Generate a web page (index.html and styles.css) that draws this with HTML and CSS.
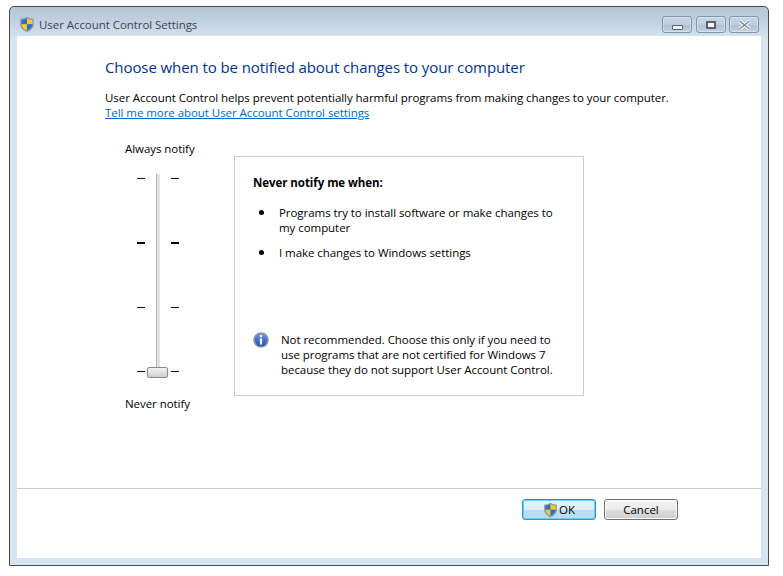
FILE: index.html
```html
<!DOCTYPE html>
<html lang="en">
<head>
<meta charset="utf-8">
<title>User Account Control Settings</title>
<link rel="stylesheet" href="styles.css">
</head>
<body>
<svg class="defs" width="0" height="0" aria-hidden="true">
  <defs>
    <symbol id="shield" viewBox="0 0 16 16">
      <path d="M8 .3 C6 1.8 4 2.2 1.2 2.2 V8 C1.2 11.5 4.5 14 8 15.8 C11.5 14 14.8 11.5 14.8 8 V2.2 C12 2.2 10 1.8 8 .3Z" fill="#8f99a3"/>
      <path d="M8 1.8 C6.4 2.8 4.6 3.3 2.6 3.4 V7.8 H8Z" fill="#2c6fc4"/>
      <path d="M8 1.8 C9.6 2.8 11.4 3.3 13.4 3.4 V7.8 H8Z" fill="#f3c92f"/>
      <path d="M2.6 7.8 H8 V14.2 C5.2 12.9 2.6 10.8 2.6 7.8Z" fill="#f3c92f"/>
      <path d="M13.4 7.8 H8 V14.2 C10.8 12.9 13.4 10.8 13.4 7.8Z" fill="#2c6fc4"/>
    </symbol>
    <linearGradient id="infoFill" x1="0" y1="0" x2="0" y2="1">
      <stop offset="0" stop-color="#6f95dc"/>
      <stop offset="1" stop-color="#1f4fb0"/>
    </linearGradient>
  </defs>
</svg>
<div class="window">
  <header class="titlebar">
    <svg class="shield-title"><use href="#shield"/></svg>
    <span class="title">User Account Control Settings</span>
    <div class="controls">
      <div class="ctl ctl-min"><span class="glyph-min"></span></div>
      <div class="ctl ctl-max"><span class="glyph-max"></span></div>
      <div class="ctl ctl-close">
        <svg class="glyph-close" viewBox="0 0 14 10"><path d="M2 1 L12 9 M12 1 L2 9" stroke="#fff" stroke-width="3.6"/><path d="M2 1 L12 9 M12 1 L2 9" stroke="#7f8894" stroke-width="1.6"/></svg>
      </div>
    </div>
  </header>
  <main class="client">
    <div class="content">
      <h1 class="heading">Choose when to be notified about changes to your computer</h1>
      <p class="intro">User Account Control helps prevent potentially harmful programs from making changes to your computer.</p>
      <a class="link" href="#">Tell me more about User Account Control settings</a>
      <div class="panel">
        <div class="slider-col">
          <div class="label-top">Always notify</div>
          <div class="slider">
            <div class="track"></div>
            <div class="tick-row"><span class="tick"></span><span class="tick"></span></div>
            <div class="tick-row"><span class="tick tick-bold"></span><span class="tick tick-bold"></span></div>
            <div class="tick-row"><span class="tick"></span><span class="tick"></span></div>
            <div class="tick-row"><span class="tick"></span><span class="tick"></span></div>
            <div class="thumb"></div>
          </div>
          <div class="label-bottom">Never notify</div>
        </div>
        <section class="box">
          <div class="box-title">Never notify me when:</div>
          <ul class="list">
            <li>Programs try to install software or make changes to my computer</li>
            <li>I make changes to Windows settings</li>
          </ul>
          <div class="note">
            <svg class="info" viewBox="0 0 16 16">
              <circle cx="8" cy="8" r="7.8" fill="#8f99ab"/>
              <circle cx="8" cy="8" r="6.3" fill="url(#infoFill)"/>
              <rect x="6.9" y="3" width="2.2" height="2.2" fill="#fff"/>
              <rect x="6.9" y="6.4" width="2.2" height="6.2" fill="#fff"/>
            </svg>
            <p class="note-text">Not recommended. Choose this only if you need to use programs that are not certified for Windows 7 because they do not support User Account Control.</p>
          </div>
        </section>
      </div>
    </div>
    <footer class="footer">
      <button class="btn btn-ok" type="button"><svg class="shield-btn"><use href="#shield"/></svg>OK</button>
      <button class="btn btn-cancel" type="button">Cancel</button>
    </footer>
  </main>
</div>
</body>
</html>
```

FILE: styles.css
```css
* { box-sizing: border-box; }
html, body { margin: 0; height: 100%; background: #fff; }
body {
  width: 783px;
  height: 576px;
  padding: 6px 14px 10px 9px;
  font-family: "Open Sans", "Noto Sans", sans-serif;
  font-size: 11.5px;
  letter-spacing: -0.055px;
  color: #000;
  overflow: hidden;
}
.defs { position: absolute; }
.window {
  height: 100%;
  display: flex;
  flex-direction: column;
  border: 1px solid #4a4a4a;
  border-radius: 5px 5px 0 0;
  padding: 0 7px 7px;
  background: linear-gradient(180deg, #b4c5d8 0, #c3d2e2 16px, #d7e4f1 32px, #d7e4f1 100%);
}
.titlebar {
  height: 29px;
  flex: none;
  display: flex;
  align-items: center;
  padding-top: 6px;
  margin: 0 0 0 2px;
}
.shield-title { width: 16px; height: 17px; margin-right: 4px; }
.title { font-size: 11.5px; color: #3c4450; }
.controls { margin-left: auto; display: flex; gap: 4px; margin-right: 2px; }
.ctl {
  width: 30px;
  height: 17px;
  border: 1px solid #8094af;
  border-radius: 3px;
  background: linear-gradient(180deg, #c8d6e5, #bccddf 50%, #adc0d4 52%, #c2d2e2);
  box-shadow: inset 0 0 0 1px rgba(255,255,255,.35);
  display: flex;
  align-items: center;
  justify-content: center;
}
.ctl-close { margin-left: -1px; }
.glyph-min { width: 11px; height: 5px; margin-top: 6px; border: 1px solid #565f6b; background: #f4f6f8; border-radius: 1px; }
.glyph-max { width: 10px; height: 8px; border: 2px solid #565f6b; background: #f4f6f8; border-radius: 1px; }
.glyph-close { width: 13px; height: 10px; }
.client {
  flex: 1;
  display: flex;
  flex-direction: column;
  background: #fff;
}
.content { flex: 1; padding: 20px 0 0 88px; }
.heading {
  margin: 0;
  font-size: 15px;
  font-weight: 400;
  line-height: 22px;
  letter-spacing: -0.09px;
  color: #003399;
}
.intro { margin: 12px 0 0; line-height: 16px; }
.link { display: block; line-height: 14px; color: #0066cc; text-decoration: underline; }
.panel { display: flex; margin-top: 20px; }
.slider-col { width: 129px; padding-left: 20px; }
.label-top { line-height: 16px; padding-top: 1px; }
.slider {
  position: relative;
  width: 42px;
  height: 214px;
  margin: 14px 0 0 12px;
  padding: 7px 0 12px;
  display: flex;
  flex-direction: column;
  justify-content: space-between;
}
.track {
  position: absolute;
  left: 19px;
  top: 3px;
  width: 4px;
  height: 195px;
  background: #e2e2e2;
  border-left: 1px solid #b5b5b5;
}
.tick-row { display: flex; justify-content: space-between; height: 2px; align-items: flex-start; }
.tick { width: 8px; height: 1px; background: #111; }
.tick-bold { height: 2px; background: #000; }
.thumb {
  position: absolute;
  left: 10px;
  top: 196px;
  width: 21px;
  height: 11px;
  border: 1px solid #8a8a8a;
  border-radius: 2px;
  background: linear-gradient(180deg, #f4f4f4, #dedede 55%, #cfcfcf);
}
.label-bottom { line-height: 16px; margin-top: 11px; }
.box {
  width: 350px;
  height: 240px;
  margin-top: 16px;
  border: 1px solid #cccccc;
  padding: 18px 18px 0;
  display: flex;
  flex-direction: column;
}
.box-title { font-weight: 700; line-height: 16px; }
.list { list-style: none; margin: 14px 0 0; padding: 0 5px 0 6px; }
.list li { position: relative; padding-left: 20px; line-height: 15px; margin-bottom: 10px; }
.list li::before {
  content: "";
  position: absolute;
  left: 0;
  top: 5px;
  width: 5px;
  height: 5px;
  border-radius: 50%;
  background: #000;
}
.note { display: flex; margin-top: auto; margin-bottom: 18px; }
.info { width: 16px; height: 16px; flex: none; margin-right: 12px; }
.note-text { margin: 0; line-height: 15px; width: 280px; }
.footer {
  height: 70px;
  flex: none;
  border-top: 1px solid #cdcdcd;
  display: flex;
  justify-content: flex-end;
  gap: 8px;
  padding: 10px 83px 0 0;
}
.btn {
  width: 74px;
  height: 21px;
  padding: 0;
  font: inherit;
  color: #000;
  border-radius: 3px;
  display: flex;
  align-items: center;
  justify-content: center;
}
.btn-ok {
  border: 1px solid #2c93d2;
  background: linear-gradient(180deg, #ecf6fc, #d9eef9 50%, #bcdff1 52%, #b5dcf0);
  box-shadow: inset 0 0 0 1px #63d0f5;
}
.btn-cancel {
  border: 1px solid #707070;
  background: linear-gradient(180deg, #f4f4f4, #ebebeb 50%, #dddddd 52%, #cfcfcf);
  box-shadow: inset 0 0 0 1px #fbfbfb;
}
.shield-btn { width: 15px; height: 16px; margin-right: 1px; }
```
